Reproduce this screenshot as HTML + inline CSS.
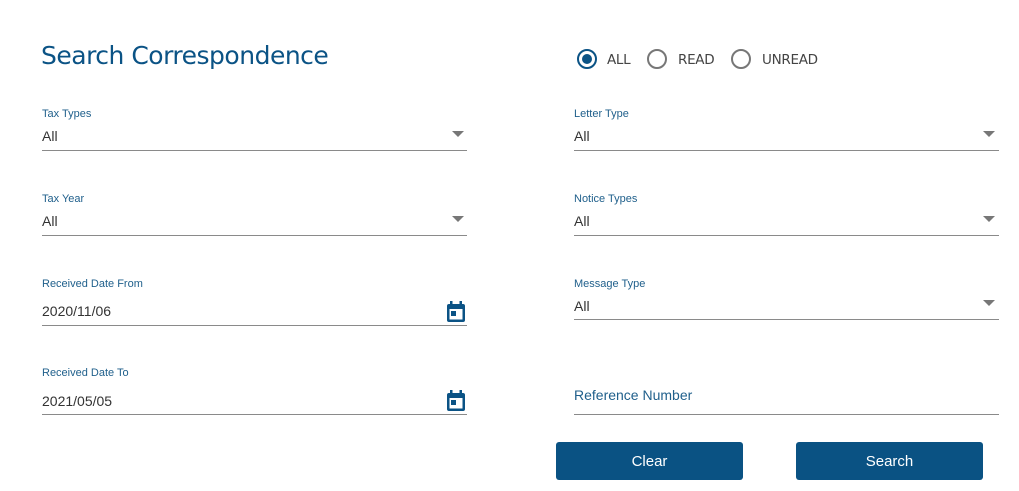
<!DOCTYPE html>
<html><head><style>
body{margin:0;width:1019px;height:491px;background:#fff;font-family:"Liberation Sans",sans-serif;position:relative;overflow:hidden}
.a{position:absolute}
.t{left:41px;top:41px;font-size:25px;color:#0b5385;font-family:"DejaVu Sans","Liberation Sans",sans-serif;letter-spacing:-0.5px}
.lbl{font-size:11px;color:#1f5f8b}
.val{font-size:14px;color:#333}
.ln{height:1px;background:#8a8a8a}
.arr{width:0;height:0;border-left:6px solid transparent;border-right:6px solid transparent;border-top:6px solid #777}
.btn{background:#0a5283;color:#fff;font-size:15px;text-align:center;line-height:40px;border-radius:3px;width:187px;height:38px;top:442px}
.rad{width:20px;height:20px;border:2px solid #777;border-radius:50%;box-sizing:border-box;top:49px}
.rt{top:52px;font-size:13.5px;color:#444;font-family:"DejaVu Sans",sans-serif;letter-spacing:-0.3px}
</style></head><body>
<div class="a t">Search Correspondence</div>

<div class="a rad" style="left:577px;border-color:#0b5385"><div style="width:10px;height:10px;border-radius:50%;background:#0b5385;margin:3px"></div></div>
<div class="a rt" style="left:607px">ALL</div>
<div class="a rad" style="left:647px"></div>
<div class="a rt" style="left:678px">READ</div>
<div class="a rad" style="left:731px"></div>
<div class="a rt" style="left:762px">UNREAD</div>

<div class="a lbl" style="left:42px;top:108px">Tax Types</div>
<div class="a val" style="left:42px;top:128px">All</div>
<div class="a arr" style="left:452px;top:131px"></div>
<div class="a ln" style="left:42px;top:150px;width:425px"></div>

<div class="a lbl" style="left:42px;top:193px">Tax Year</div>
<div class="a val" style="left:42px;top:213px">All</div>
<div class="a arr" style="left:452px;top:216px"></div>
<div class="a ln" style="left:42px;top:235px;width:425px"></div>

<div class="a lbl" style="left:42px;top:278px">Received Date From</div>
<div class="a val" style="left:42px;top:303px">2020/11/06</div>
<svg class="a" style="left:446px;top:301px" width="20" height="22" viewBox="0 0 20 22"><rect x="1" y="3" width="18" height="18" rx="2" fill="#0b5385"/><rect x="4" y="0" width="2.5" height="5" fill="#0b5385"/><rect x="13.5" y="0" width="2.5" height="5" fill="#0b5385"/><rect x="3.5" y="8" width="13" height="10.5" fill="#fff"/><rect x="5" y="10" width="5" height="5" fill="#0b5385"/></svg>
<div class="a ln" style="left:42px;top:325px;width:425px"></div>

<div class="a lbl" style="left:42px;top:367px">Received Date To</div>
<div class="a val" style="left:42px;top:393px">2021/05/05</div>
<svg class="a" style="left:446px;top:390px" width="20" height="22" viewBox="0 0 20 22"><rect x="1" y="3" width="18" height="18" rx="2" fill="#0b5385"/><rect x="4" y="0" width="2.5" height="5" fill="#0b5385"/><rect x="13.5" y="0" width="2.5" height="5" fill="#0b5385"/><rect x="3.5" y="8" width="13" height="10.5" fill="#fff"/><rect x="5" y="10" width="5" height="5" fill="#0b5385"/></svg>
<div class="a ln" style="left:42px;top:414px;width:425px"></div>

<div class="a lbl" style="left:574px;top:108px">Letter Type</div>
<div class="a val" style="left:574px;top:128px">All</div>
<div class="a arr" style="left:983px;top:131px"></div>
<div class="a ln" style="left:574px;top:150px;width:425px"></div>

<div class="a lbl" style="left:574px;top:193px">Notice Types</div>
<div class="a val" style="left:574px;top:213px">All</div>
<div class="a arr" style="left:983px;top:216px"></div>
<div class="a ln" style="left:574px;top:235px;width:425px"></div>

<div class="a lbl" style="left:574px;top:278px">Message Type</div>
<div class="a val" style="left:574px;top:298px">All</div>
<div class="a arr" style="left:983px;top:300px"></div>
<div class="a ln" style="left:574px;top:319px;width:425px"></div>

<div class="a" style="left:574px;top:387px;font-size:14px;color:#1f5f8b">Reference Number</div>
<div class="a ln" style="left:574px;top:414px;width:425px"></div>

<div class="a btn" style="left:556px">Clear</div>
<div class="a btn" style="left:796px">Search</div>
</body></html>
